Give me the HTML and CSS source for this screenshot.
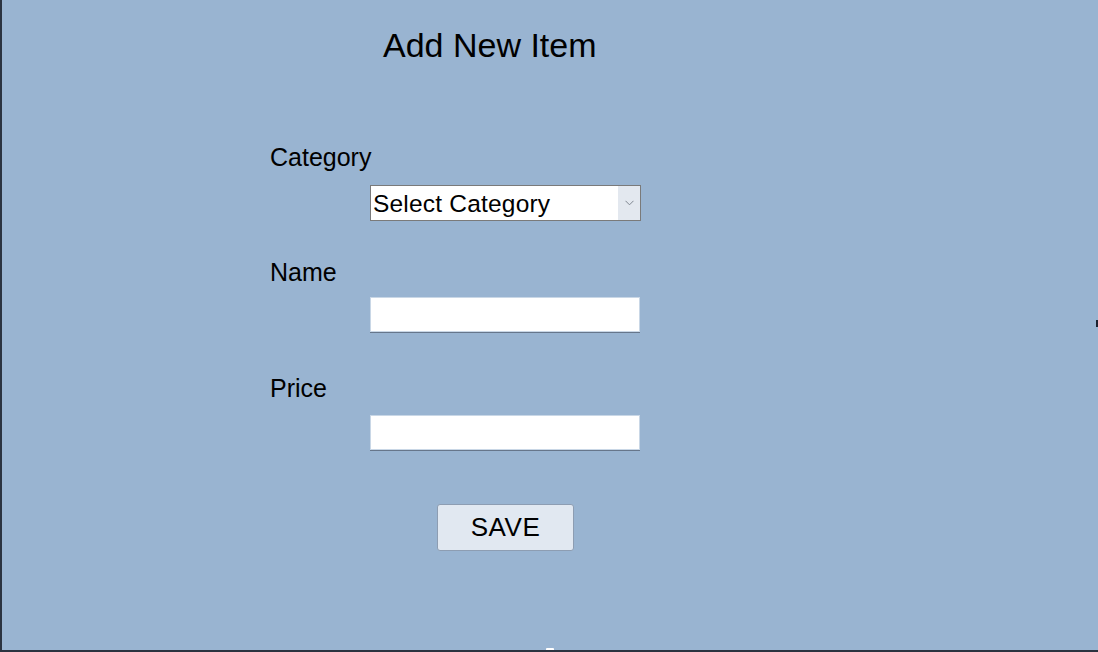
FILE: index.html
```html
<!DOCTYPE html>
<html lang="en">
<head>
<meta charset="utf-8">
<title>Add New Item</title>
<link rel="stylesheet" href="styles.css">
</head>
<body>
<div class="window">
  <h1 class="title">Add New Item</h1>
  <form class="form">
    <label class="label label-category">Category</label>
    <div class="select">
      <span class="select-value">Select Category</span>
      <span class="select-arrow">
        <svg width="9" height="6" viewBox="0 0 9 6"><path d="M0.5 0.8 L4.5 4.8 L8.5 0.8" fill="none" stroke="#7f8690" stroke-width="1"/></svg>
      </span>
    </div>
    <label class="label label-name">Name</label>
    <div class="input input-name"></div>
    <label class="label label-price">Price</label>
    <div class="input input-price"></div>
    <div class="button">SAVE</div>
  </form>
  <span class="mark-right"></span>
  <span class="mark-bottom"></span>
</div>
</body>
</html>
```
FILE: styles.css
```css
html, body {
  margin: 0;
  padding: 0;
}
body {
  background: #99b4d1;
  font-family: "Liberation Sans", Arial, sans-serif;
  color: #000;
}
.window {
  position: relative;
  width: 1098px;
  height: 652px;
  box-sizing: border-box;
  border-left: 2px solid #2b3340;
  border-bottom: 2px solid #2b3340;
  background: #99b4d1;
  overflow: hidden;
}
.title {
  margin: 0;
  padding: 28px 0 0 381px;
  font-size: 34px;
  font-weight: normal;
  line-height: 34px;
}
.form {
  display: flex;
  flex-direction: column;
  align-items: flex-start;
  padding-left: 268px;
}
.label {
  display: block;
  font-size: 25px;
  line-height: 25px;
}
.label-category { margin-top: 83px; }
.label-name { margin-top: 39px; }
.label-price { margin-top: 44px; }
.select {
  margin: 15px 0 0 100px;
  width: 271px;
  height: 36px;
  box-sizing: border-box;
  border: 1px solid #7a7a7a;
  background: #fff;
  display: flex;
  align-items: stretch;
  padding: 2px;
}
.select-value {
  flex: 1;
  font-size: 24.5px;
  line-height: 32px;
  padding-left: 0;
  letter-spacing: 0.2px;
  background: #fff;
}
.select-arrow {
  width: 22px;
  margin: -2px -2px -2px 0;
  background: #e3e8ef;
  display: flex;
  align-items: center;
  justify-content: center;
}
.input {
  margin-left: 100px;
  width: 270px;
  height: 35px;
  box-sizing: border-box;
  background: #fff;
  border: 1px solid #c9d7e6;
  box-shadow: 0 1px 0 #66768b;
}
.input-name { margin-top: 12px; }
.input-price { margin-top: 14px; }
.button {
  margin: 54px 0 0 167px;
  width: 137px;
  height: 47px;
  box-sizing: border-box;
  background: #e1e8f1;
  border: 1px solid #8d9db2;
  border-radius: 3px;
  font-size: 26px;
  line-height: 45px;
  letter-spacing: 0.5px;
  text-align: center;
}
.mark-right {
  position: absolute;
  right: 0;
  top: 320px;
  width: 2px;
  height: 7px;
  background: #1c2230;
}
.mark-bottom {
  position: absolute;
  left: 544px;
  bottom: -2px;
  width: 8px;
  height: 4px;
  background: #fff;
  border-radius: 1px 1px 0 0;
}
```
